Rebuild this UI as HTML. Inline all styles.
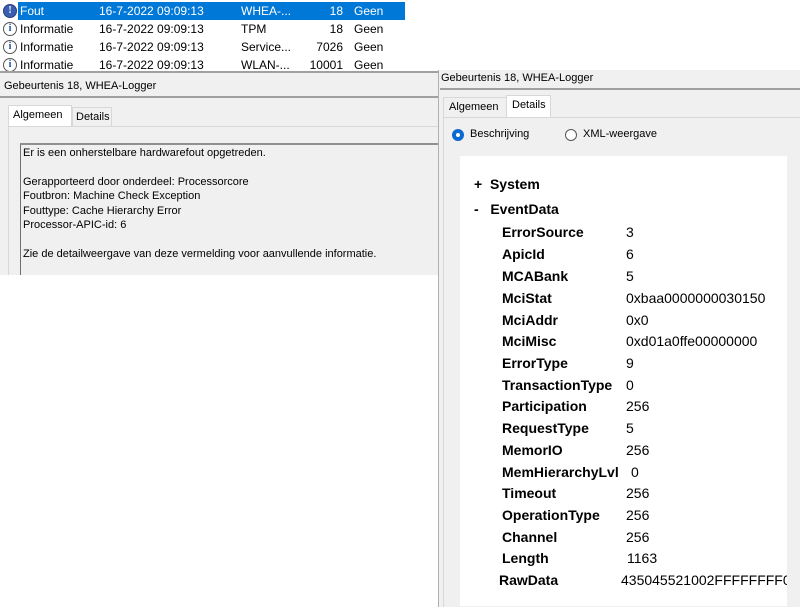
<!DOCTYPE html>
<html><head><meta charset="utf-8"><style>
*{margin:0;padding:0;box-sizing:border-box}
body{width:800px;height:612px;position:relative;background:#fff;font-family:"Liberation Sans",sans-serif;font-size:12px;color:#000;overflow:hidden}
.a{position:absolute;white-space:nowrap}
.ic{position:absolute;width:14px;height:14px;border-radius:50%;border:1px solid #555;background:#fff;font:bold 10px "Liberation Serif",serif;color:#1a4fa0;text-align:center;line-height:12px}
.row{position:absolute;left:0;width:440px;height:18px}
.lbl{position:absolute;left:502px;font-weight:bold;font-size:14px}
.val{position:absolute;left:626px;font-size:14px}
</style></head><body>
<div class="a" style="left:18px;top:2px;width:387px;height:18px;background:#0078d7"></div>
<div class="ic" style="left:3px;top:4px;background:#3a5fb0;color:#fff;border-color:#2a3f80">!</div>
<div class="ic" style="left:3px;top:22px">i</div>
<div class="ic" style="left:3px;top:40px">i</div>
<div class="ic" style="left:3px;top:58px">i</div>
<div class="a" style="left:20px;top:4px;color:#fff">Fout</div>
<div class="a" style="left:99px;top:4px;color:#fff">16-7-2022 09:09:13</div>
<div class="a" style="left:241px;top:4px;color:#fff">WHEA-...</div>
<div class="a" style="left:300px;width:43px;text-align:right;top:4px;color:#fff">18</div>
<div class="a" style="left:354px;top:4px;color:#fff">Geen</div>
<div class="a" style="left:20px;top:22px">Informatie</div><div class="a" style="left:99px;top:22px">16-7-2022 09:09:13</div><div class="a" style="left:241px;top:22px">TPM</div><div class="a" style="left:300px;width:43px;text-align:right;top:22px">18</div><div class="a" style="left:354px;top:22px">Geen</div>
<div class="a" style="left:20px;top:40px">Informatie</div><div class="a" style="left:99px;top:40px">16-7-2022 09:09:13</div><div class="a" style="left:241px;top:40px">Service...</div><div class="a" style="left:300px;width:43px;text-align:right;top:40px">7026</div><div class="a" style="left:354px;top:40px">Geen</div>
<div class="a" style="left:20px;top:58px">Informatie</div><div class="a" style="left:99px;top:58px">16-7-2022 09:09:13</div><div class="a" style="left:241px;top:58px">WLAN-...</div><div class="a" style="left:300px;width:43px;text-align:right;top:58px">10001</div><div class="a" style="left:354px;top:58px">Geen</div>
<!-- left panel -->
<div class="a" style="left:0;top:71px;width:440px;height:204px;background:#f0f0f0;border-top:2px solid #a0a0a0"></div>
<div class="a" style="left:4px;top:80px;font-size:11px">Gebeurtenis 18, WHEA-Logger</div>
<div class="a" style="left:0;top:96px;width:440px;height:2px;background:#a0a0a0"></div>
<div class="a" style="left:8px;top:105px;width:64px;height:22px;background:#fff;border:1px solid #d8d8d8;border-bottom:none"></div>
<div class="a" style="left:13px;top:109px;font-size:11px">Algemeen</div>
<div class="a" style="left:72px;top:107px;width:40px;height:19px;border:1px solid #d8d8d8;border-bottom:none"></div>
<div class="a" style="left:76px;top:111px;font-size:11px">Details</div>
<div class="a" style="left:8px;top:126px;width:432px;height:149px;border-left:1px solid #d8d8d8;border-top:1px solid #d8d8d8"></div>
<div class="a" style="left:20px;top:143px;width:420px;height:132px;border-left:1px solid #707070;border-top:2px solid #909090"></div>
<div class="a" style="left:23px;top:146px;font-size:11px;line-height:14.4px;white-space:pre">Er is een onherstelbare hardwarefout opgetreden.

Gerapporteerd door onderdeel: Processorcore
Foutbron: Machine Check Exception
Fouttype: Cache Hierarchy Error
Processor-APIC-id: 6

Zie de detailweergave van deze vermelding voor aanvullende informatie.</div>
<!-- right panel -->
<div class="a" style="left:438px;top:70px;width:362px;height:537px;background:#f0f0f0;border-left:1px solid #b0b0b0"></div>
<div class="a" style="left:441px;top:72px;font-size:11px">Gebeurtenis 18, WHEA-Logger</div>
<div class="a" style="left:440px;top:88px;width:360px;height:2px;background:#a0a0a0"></div>
<div class="a" style="left:443px;top:97px;width:64px;height:20px;border:1px solid #d8d8d8;border-bottom:none"></div>
<div class="a" style="left:449px;top:101px;font-size:11px">Algemeen</div>
<div class="a" style="left:506px;top:95px;width:45px;height:23px;background:#fff;border:1px solid #d8d8d8;border-bottom:none"></div>
<div class="a" style="left:512px;top:99px;font-size:11px">Details</div>
<div class="a" style="left:443px;top:117px;width:357px;height:490px;border-left:1px solid #d8d8d8;border-top:1px solid #d8d8d8"></div>
<div class="a" style="left:452px;top:129px;width:12px;height:12px;border-radius:50%;background:#0a6ad0"></div>
<div class="a" style="left:456px;top:133px;width:4px;height:4px;border-radius:50%;background:#fff"></div>
<div class="a" style="left:470px;top:128px;font-size:11px">Beschrijving</div>
<div class="a" style="left:565px;top:129px;width:12px;height:12px;border-radius:50%;border:1px solid #555;background:#fff"></div>
<div class="a" style="left:583px;top:128px;font-size:11px">XML-weergave</div>
<div class="a" style="left:460px;top:156px;width:327px;height:450px;background:#fff"></div>
<div class="a" style="left:474px;top:176px;font-weight:bold;font-size:14px">+&nbsp;&nbsp;System</div>
<div class="a" style="left:474px;top:201px;font-weight:bold;font-size:14px">-&nbsp;&nbsp;&nbsp;EventData</div>
<div class="a lbl" style="top:224px">ErrorSource</div><div class="a val" style="top:224px">3</div>
<div class="a lbl" style="top:246px">ApicId</div><div class="a val" style="top:246px">6</div>
<div class="a lbl" style="top:268px">MCABank</div><div class="a val" style="top:268px">5</div>
<div class="a lbl" style="top:290px">MciStat</div><div class="a val" style="top:290px">0xbaa0000000030150</div>
<div class="a lbl" style="top:312px">MciAddr</div><div class="a val" style="top:312px">0x0</div>
<div class="a lbl" style="top:333px">MciMisc</div><div class="a val" style="top:333px">0xd01a0ffe00000000</div>
<div class="a lbl" style="top:355px">ErrorType</div><div class="a val" style="top:355px">9</div>
<div class="a lbl" style="top:377px">TransactionType</div><div class="a val" style="top:377px">0</div>
<div class="a lbl" style="top:398px">Participation</div><div class="a val" style="top:398px">256</div>
<div class="a lbl" style="top:420px">RequestType</div><div class="a val" style="top:420px">5</div>
<div class="a lbl" style="top:442px">MemorIO</div><div class="a val" style="top:442px">256</div>
<div class="a lbl" style="top:464px">MemHierarchyLvl</div><div class="a val" style="left:631px;top:464px">0</div>
<div class="a lbl" style="top:485px">Timeout</div><div class="a val" style="top:485px">256</div>
<div class="a lbl" style="top:507px">OperationType</div><div class="a val" style="top:507px">256</div>
<div class="a lbl" style="top:529px">Channel</div><div class="a val" style="top:529px">256</div>
<div class="a lbl" style="top:550px">Length</div><div class="a val" style="left:627px;top:550px">1163</div>
<div class="a lbl" style="left:499px;top:572px">RawData</div>
<div class="a" style="left:621px;top:572px;font-size:14px;width:166px;overflow:hidden">435045521002FFFFFFFF0</div>
</body></html>
